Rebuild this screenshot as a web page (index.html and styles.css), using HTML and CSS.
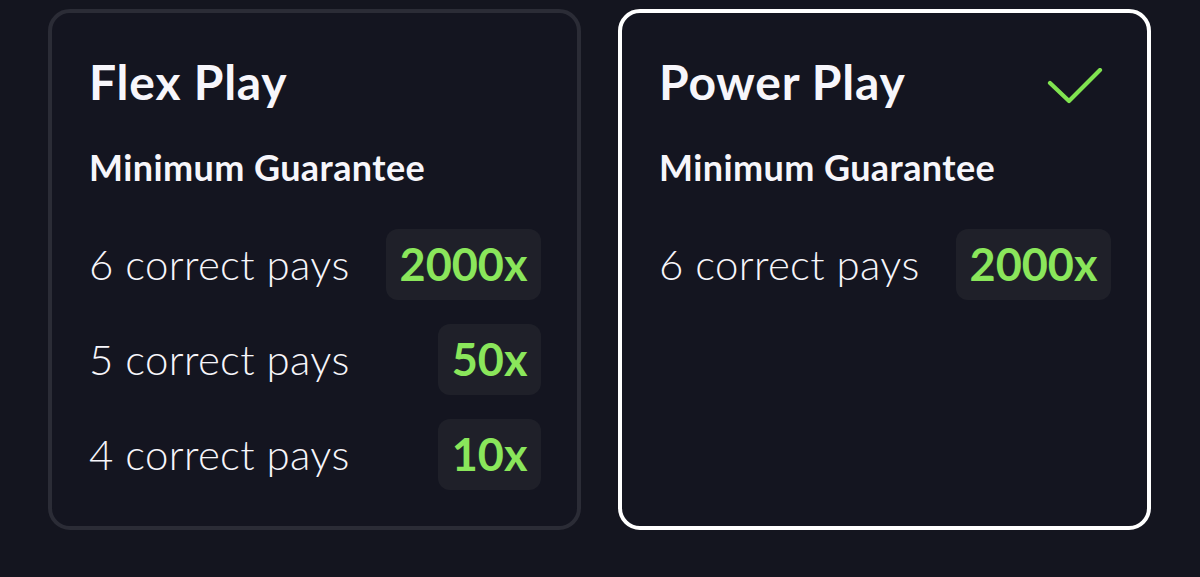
FILE: index.html
```html
<!DOCTYPE html>
<html lang="en">
<head>
<meta charset="utf-8">
<title>Play types</title>
<link rel="stylesheet" href="styles.css">
</head>
<body>
<div class="cards">
  <section class="card">
    <div class="card-head">
      <h2 class="title">Flex Play</h2>
    </div>
    <h3 class="subtitle">Minimum Guarantee</h3>
    <div class="payouts">
      <span class="label">6 correct pays</span><span class="pill">2000x</span>
      <span class="label">5 correct pays</span><span class="pill">50x</span>
      <span class="label">4 correct pays</span><span class="pill">10x</span>
    </div>
  </section>
  <section class="card selected">
    <div class="card-head">
      <h2 class="title">Power Play</h2>
      <svg class="check" width="56" height="36" viewBox="0 0 56 36" aria-hidden="true">
        <path d="M3 15 L22 33 L53 2" fill="none" stroke="#80e350" stroke-width="4.2" stroke-linecap="round" stroke-linejoin="round"/>
      </svg>
    </div>
    <h3 class="subtitle">Minimum Guarantee</h3>
    <div class="payouts">
      <span class="label">6 correct pays</span><span class="pill">2000x</span>
    </div>
  </section>
</div>
</body>
</html>
```

FILE: styles.css
```css
html, body {
  margin: 0;
  padding: 0;
}
body {
  background: #14151f;
  font-family: Lato, "Noto Sans", sans-serif;
  color: #f7f6fb;
  width: 1200px;
  height: 577px;
  overflow: hidden;
}
.cards {
  display: flex;
  gap: 37px;
  padding: 9px 0 0 48px;
}
.card {
  box-sizing: border-box;
  width: 533px;
  height: 521px;
  border: 4px solid #2b2c36;
  border-radius: 22px;
  background: #141520;
  padding: 43px 35px 0 37px;
}
.card.selected {
  border-color: #ffffff;
}
.card-head {
  display: flex;
  justify-content: space-between;
  height: 52px;
}
.title {
  margin: 0;
  font-size: 48px;
  font-weight: 700;
  line-height: 52px;
  letter-spacing: 0.8px;
  white-space: nowrap;
}
.check {
  display: block;
  margin: 12px 9px 0 0;
}
.subtitle {
  margin: 37px 0 0;
  font-size: 36px;
  font-weight: 700;
  line-height: 44px;
  letter-spacing: 0.4px;
  white-space: nowrap;
}
.payouts {
  display: inline-grid;
  grid-template-columns: auto auto;
  column-gap: 36px;
  row-gap: 24px;
  align-items: center;
  margin-top: 40px;
}
.label {
  font-size: 42px;
  font-weight: 300;
  line-height: 71px;
  letter-spacing: 0.3px;
  white-space: nowrap;
}
.pill {
  justify-self: end;
  height: 71px;
  box-sizing: border-box;
  padding: 0 14px;
  border-radius: 12px;
  background: #1f2029;
  color: #8ae65b;
  font-size: 45px;
  font-weight: 700;
  line-height: 71px;
  white-space: nowrap;
}
```
